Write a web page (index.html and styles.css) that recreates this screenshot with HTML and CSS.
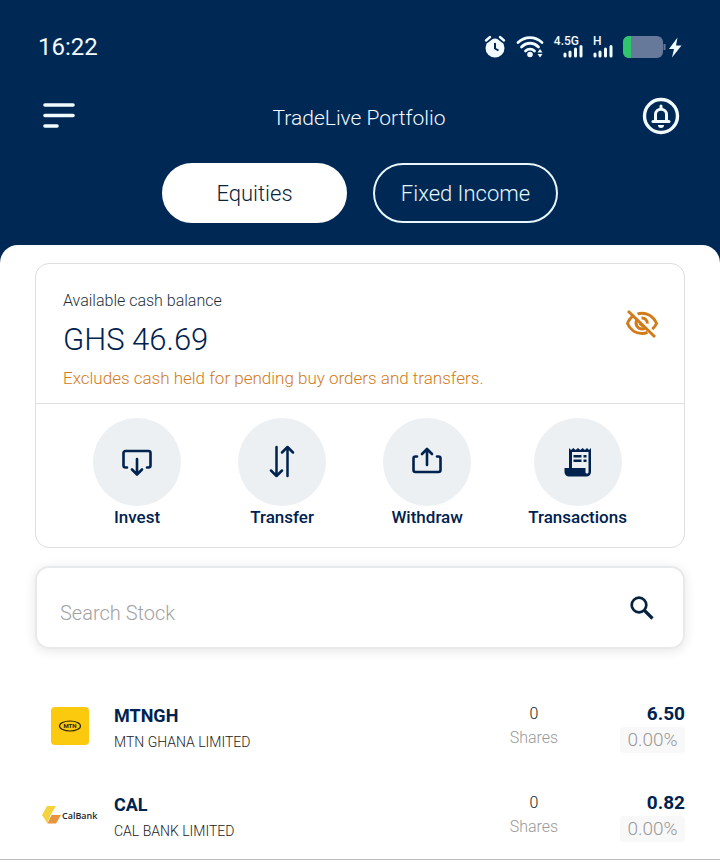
FILE: index.html
```html
<!DOCTYPE html>
<html lang="en">

<head>
    <meta charset="UTF-8">
    <meta name="viewport" content="width=device-width, initial-scale=1.0">
    <title>TradeLive Portfolio</title>
    <link rel="stylesheet" href="styles.css">
</head>

<body>

<header>
    <div class="status-bar">
        <span class="clock">16:22</span>
        <div class="status-icons">
            <svg width="22" height="24" viewBox="0 0 22 24">
                <circle cx="11" cy="13" r="9.5" fill="#f2fbff"/>
                <path d="M2 6l5-4M20 6l-5-4" stroke="#002855" stroke-width="5"/>
                <path d="M2 5.5l4-3.5M20 5.5l-4-3.5" stroke="#f2fbff" stroke-width="2.4" stroke-linecap="round"/>
                <path d="M11 8v5.5l3.5 2" stroke="#002855" stroke-width="2" fill="none"/>
            </svg>
            <svg width="28" height="24" viewBox="0 0 28 24" fill="none" stroke="#f2fbff" stroke-width="2.8" stroke-linecap="round">
                <path d="M2 7.5c7-6.5 17-6.5 24 0M5.5 12c5-5 12-5 17 0M9.5 16c2.5-2.5 6.5-2.5 9 0"/>
                <circle cx="14" cy="19.5" r="2.8" fill="#f2fbff" stroke="none"/>
                <path d="M21.5 17.5l2.5-3.5 2.5 3.5zM21.5 19l2.5 3.5 2.5-3.5z" fill="#f2fbff" stroke="none"/>
            </svg>
            <div class="signal">
                <span>4.5G</span>
                <svg width="20" height="14" viewBox="0 0 20 14" stroke="#f2fbff" stroke-width="3" stroke-linecap="round">
                    <path d="M2 11v-2M7 11V7M12.5 11V4M18 11V1.5"/>
                </svg>
            </div>
            <div class="signal">
                <span>H</span>
                <svg width="20" height="14" viewBox="0 0 20 14" stroke="#f2fbff" stroke-width="3" stroke-linecap="round">
                    <path d="M2 11v-2M7 11V7M12.5 11V4M18 11V1.5"/>
                </svg>
            </div>
            <svg width="59" height="24" viewBox="0 0 59 24">
                <rect x="0" y="1" width="40" height="22" rx="6" fill="#66799a"/>
                <path d="M8 1v22H6a6 6 0 0 1-6-6V7a6 6 0 0 1 6-6z" fill="#2fc56d"/>
                <path d="M41.5 9v6" stroke="#66799a" stroke-width="2"/>
                <path d="M54.5 2.5L46 14h5l-2 8.500 9.500-12h-5.500z" fill="#f2fbff"/>
            </svg>
        </div>
    </div>

    <div class="title-bar">
        <button type="button" class="icon-btn" aria-label="Menu">
            <svg width="34" height="38" viewBox="0 0 34 38" stroke="#f2fbff" stroke-width="3.6" stroke-linecap="round">
                <path d="M3 8h28M3 18.5h28M3 29h12"/>
            </svg>
        </button>
        <h1>TradeLive Portfolio</h1>
        <button type="button" class="icon-btn" aria-label="Notifications">
            <svg width="38" height="38" viewBox="0 0 38 38" fill="none" stroke="#f2fbff" stroke-width="3">
                <circle cx="19" cy="19" r="16.5" stroke-width="3.4"/>
                <path d="M11 24.5h16" stroke-linecap="round"/>
                <path d="M13.5 24v-6.5c0-7 11-7 11 0V24"/>
                <path d="M19 11V9" stroke-linecap="round"/>
                <path d="M16 28h6a3 3 0 0 1-6 0z" fill="#f2fbff" stroke="none"/>
            </svg>
        </button>
    </div>

    <div class="tabs">
        <button type="button" class="tab active">Equities</button>
        <button type="button" class="tab">Fixed Income</button>
    </div>
</header>

<main>
    <section class="card">
        <div class="balance">
            <div>
                <p class="balance-label">Available cash balance</p>
                <p class="balance-amount">GHS 46.69</p>
                <p class="balance-note">Excludes cash held for pending buy orders and transfers.</p>
            </div>
            <button type="button" class="icon-btn" aria-label="Hide balance">
                <svg width="34" height="30" viewBox="0 0 34 30" fill="none" stroke="#d17b1a" stroke-width="3">
                    <path d="M9 6.5C5.5 8.5 3.5 11.5 2.5 14.5 5 20.5 10.5 24.5 17 24.5c2 0 4-.4 5.5-1.1M12.5 4.9C21 2.5 28.5 7 31.5 14.5c-1 2.3-2.5 4.2-4.3 5.7"/>
                    <path d="M11.7 11.5c-2 4 1 8.5 5.3 8.5 1 0 2-.2 2.7-.6M16.5 9c3.5-.3 6 2.5 5.8 5.7"/>
                    <path d="M14.5 14l4 3.7"/>
                    <path d="M3 2l27 26"/>
                </svg>
            </button>
        </div>

        <nav class="actions">
            <a href="#invest">
                <span class="circle">
                    <svg width="30" height="30" viewBox="0 0 30 30" fill="none" stroke="#00224e" stroke-width="2.6" stroke-linecap="round" stroke-linejoin="round">
                        <path d="M5 20.5H3.5a2 2 0 0 1-2-2V6a2 2 0 0 1 2-2h23a2 2 0 0 1 2 2v12.5a2 2 0 0 1-2 2H25"/>
                        <path d="M15 12v15M10 22.5l5 5 5-5"/>
                    </svg>
                </span>
                Invest
            </a>
            <a href="#transfer">
                <span class="circle">
                    <svg width="30" height="34" viewBox="0 0 30 34" fill="none" stroke="#00224e" stroke-width="2.5" stroke-linecap="round" stroke-linejoin="round">
                        <path d="M9.5 2v29M4 25.5L9.5 31l5.5-5.5M20.5 31V2M15 7.5L20.5 2 26 7.5"/>
                    </svg>
                </span>
                Transfer
            </a>
            <a href="#withdraw">
                <span class="circle">
                    <svg width="30" height="30" viewBox="0 0 30 30" fill="none" stroke="#00224e" stroke-width="2.6" stroke-linecap="round" stroke-linejoin="round">
                        <path d="M5 9.5H3.5a2 2 0 0 0-2 2V23a2 2 0 0 0 2 2h23a2 2 0 0 0 2-2V11.5a2 2 0 0 0-2-2H25"/>
                        <path d="M15 18V2.5M10 7l5-5 5 5"/>
                    </svg>
                </span>
                Withdraw
            </a>
            <a href="#transactions">
                <span class="circle">
                    <svg width="28" height="30" viewBox="0 0 28 30" fill="#00224e">
                        <path fill-rule="evenodd" d="M5 1l2 2 2.3-2 2.3 2L14 1l2.3 2 2.3-2 2.3 2L23 1l2 2 2-2v24a4.5 4.5 0 0 1-4.5 4.5H5A4.5 4.5 0 0 1 .5 25v-4H5zM8 5v16h13.5v4c0 2 3 2 3 0V5z"/>
                        <path d="M9.5 8h8v2.6h-8zM19.5 8h3v2.6h-3zM9.5 12.5h8v2.6h-8zM19.5 12.5h3v2.6h-3z"/>
                    </svg>
                </span>
                Transactions
            </a>
        </nav>
    </section>

    <form class="search">
        <input type="search" name="stock" placeholder="Search Stock" aria-label="Search Stock">
        <button type="submit" class="icon-btn" aria-label="Search">
            <svg width="26" height="26" viewBox="0 0 26 26" fill="none" stroke="#06223f">
                <circle cx="10" cy="10" r="7.3" stroke-width="2.7"/>
                <path d="M15.5 15.5l8 8" stroke-width="3.2"/>
            </svg>
        </button>
    </form>

    <ul class="stocks">
        <li>
            <div class="logo">
                <svg width="40" height="40" viewBox="0 0 40 40">
                    <rect x="1" y="1" width="38" height="38" rx="4" fill="#fbc90e"/>
                    <ellipse cx="20" cy="20" rx="10.5" ry="5" fill="none" stroke="#2b230a" stroke-width="1.2"/>
                    <text x="20" y="22" class="mtn-text">MTN</text>
                </svg>
            </div>
            <div class="name">
                <h2>MTNGH</h2>
                <p>MTN GHANA LIMITED</p>
            </div>
            <div class="shares">
                <p class="count">0</p>
                <p>Shares</p>
            </div>
            <div class="price">
                <p class="value">6.50</p>
                <p class="change">0.00%</p>
            </div>
        </li>
        <li>
            <div class="logo">
                <svg width="58" height="24" viewBox="0 0 58 24">
                    <path d="M6 3h9L9 13 6.5 20.5 1 12z" fill="#f5d33f"/>
                    <path d="M10.5 12h9.5l-5 8.5H6.5z" fill="#e8953f"/>
                    <text x="21" y="16" class="cal-text">CalBank</text>
                </svg>
            </div>
            <div class="name">
                <h2>CAL</h2>
                <p>CAL BANK LIMITED</p>
            </div>
            <div class="shares">
                <p class="count">0</p>
                <p>Shares</p>
            </div>
            <div class="price">
                <p class="value">0.82</p>
                <p class="change">0.00%</p>
            </div>
        </li>
    </ul>
</main>

</body>
</html>
```

FILE: styles.css
```css
body {
    font-family: Roboto, "Open Sans", sans-serif;
    font-weight: 300;
    margin: 0;
    background-color: #fff;
    color: #00224e;
}

h1, h2, p, ul {
    margin: 0;
    padding: 0;
    font-weight: 300;
}

button {
    font-family: inherit;
    cursor: pointer;
}

svg {
    display: block;
}

.icon-btn {
    background: none;
    border: none;
    padding: 0;
}

header {
    background-color: #002855;
    color: #f2fbff;
    padding: 32px 38px 40px;
}

.status-bar {
    display: flex;
    justify-content: space-between;
    align-items: center;
    height: 30px;
}

.clock {
    font-size: 24px;
    font-weight: 400;
}

.status-icons {
    display: flex;
    align-items: center;
    gap: 10px;
}

.signal {
    display: flex;
    flex-direction: column;
    align-items: flex-end;
    height: 24px;
}

.signal span {
    font-size: 12px;
    line-height: 12px;
    font-weight: 500;
    margin: 0 4px -2px 0;
}

.signal + .signal span {
    align-self: flex-start;
}

.title-bar {
    display: flex;
    justify-content: space-between;
    align-items: center;
    margin-top: 35px;
    padding: 0 2px 0 4px;
}

.title-bar h1 {
    font-size: 21px;
    line-height: 34px;
    padding-top: 4px;
}

.tabs {
    display: flex;
    justify-content: center;
    gap: 26px;
    margin-top: 28px;
}

.tab {
    width: 185px;
    height: 60px;
    padding: 0;
    border: 2px solid #e6f6fb;
    border-radius: 30px;
    background: none;
    color: #e6f6fb;
    font-size: 22px;
    font-weight: 300;
}

.tab.active {
    background-color: #fff;
    border-color: #fff;
    color: #0b2438;
}

main {
    background-color: #fff;
    border-radius: 18px 18px 0 0;
    margin-top: -18px;
    padding: 18px 35px 0;
}

.card {
    border: 1px solid #dcdee0;
    border-radius: 14px;
}

.balance {
    display: flex;
    justify-content: space-between;
    align-items: center;
    padding: 26px 25px 14px 27px;
    border-bottom: 1px solid #dcdee0;
}

.balance .icon-btn {
    margin-bottom: 32px;
}

.balance-label {
    font-size: 16px;
    line-height: 22px;
    color: #1f2f3c;
}

.balance-amount {
    font-size: 31px;
    line-height: 55px;
}

.balance-note {
    font-size: 17px;
    line-height: 22px;
    color: #d17b1a;
}

.actions {
    display: flex;
    justify-content: space-evenly;
    padding: 14px 0 19px;
}

.actions a {
    display: flex;
    flex-direction: column;
    align-items: center;
    color: #00224e;
    text-decoration: none;
    font-size: 17px;
    line-height: 22px;
    font-weight: 500;
}

.circle {
    display: flex;
    justify-content: center;
    align-items: center;
    width: 88px;
    height: 88px;
    border-radius: 50%;
    background-color: #ecf0f3;
}

.search {
    display: flex;
    align-items: center;
    justify-content: space-between;
    margin-top: 18px;
    padding: 0 28px 0 23px;
    border: 2px solid #e8e9ea;
    border-radius: 14px;
    box-shadow: 0 2px 12px rgba(0, 0, 0, 0.1);
}

.search input {
    flex: 1;
    min-width: 0;
    height: 79px;
    padding: 11px 0 0;
    box-sizing: border-box;
    border: none;
    outline: none;
    background: none;
    font-family: inherit;
    font-size: 20px;
    font-weight: 300;
}

.search input::placeholder {
    color: #a2a2a2;
}

.stocks {
    list-style: none;
    margin: 32px -35px 0;
    padding: 0 35px;
    border-bottom: 1px solid #b9bbbc;
}

.stocks li {
    display: flex;
    align-items: center;
    height: 89px;
}

.logo {
    display: flex;
    justify-content: center;
    width: 70px;
    margin-right: 9px;
}

.mtn-text {
    font-size: 6px;
    font-weight: 700;
    text-anchor: middle;
    fill: #2b230a;
}

.cal-text {
    font-family: "Open Sans", sans-serif;
    font-size: 9px;
    font-weight: 600;
    fill: #22262c;
}

.name {
    flex: 1;
    padding-top: 6px;
}

.name h2 {
    font-size: 18px;
    line-height: 26px;
    font-weight: 700;
}

.name p {
    font-size: 14px;
    line-height: 26px;
    color: #222;
}

.shares {
    width: 60px;
    margin-right: 56px;
    text-align: center;
    font-size: 16px;
    line-height: 24px;
    color: #999;
}

.shares .count {
    color: #222;
}

.price {
    width: 65px;
    padding-top: 2px;
    font-size: 19px;
    line-height: 26px;
    color: #999;
}

.price .value {
    font-weight: 700;
    text-align: right;
    color: #00224e;
}

.price .change {
    text-align: center;
    background-color: #f8f8f8;
    border-radius: 4px;
}
```
